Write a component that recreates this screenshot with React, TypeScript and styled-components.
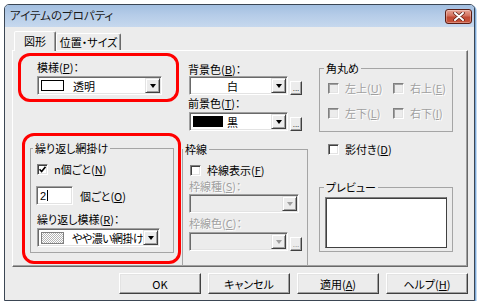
import React from 'react';
import styled, { createGlobalStyle } from 'styled-components';

const GlobalStyle = createGlobalStyle`
  html, body {
    margin: 0;
    padding: 0;
    background: #ffffff;
  }
  body {
    font-family: "Noto Sans CJK JP", "Noto Sans", sans-serif;
    font-size: 11px;
    line-height: 14px;
    color: #000;
    font-feature-settings: "palt";
  }
  *, *::before, *::after {
    box-sizing: border-box;
  }
`;

const Window = styled.div`
  margin: 4px 0 0 4px;
  width: 471px;
  height: 297px;
  border: 1px solid #3b4654;
  border-radius: 5px 5px 0 0;
  background: #ececec;
  box-shadow: 1px 1px 0 #7fa9d6, 2px 2px 0 #c4dbf2;
  display: flex;
  flex-direction: column;
  overflow: hidden;
`;

const TitleBar = styled.div`
  height: 22px;
  flex: none;
  display: flex;
  justify-content: space-between;
  align-items: flex-start;
  padding: 0 2px 0 5px;
  background: linear-gradient(to bottom, #a3bfe0 0%, #b5cce8 45%, #c6d8ee 100%);
`;

const TitleText = styled.span`
  line-height: 20px;
  font-size: 11.5px;
  color: #1b1b1b;
`;

const CloseButton = styled.div`
  margin-top: 4px;
  width: 27px;
  height: 15px;
  border: 1px solid #5b1d14;
  border-radius: 3px;
  background: linear-gradient(to bottom, #e8a595 0%, #d2705d 45%, #c04a34 55%, #c9553c 100%);
  box-shadow: inset 0 0 0 1px rgba(255, 255, 255, 0.3);
  display: flex;
  align-items: center;
  justify-content: center;
`;

const Body = styled.div`
  flex: 1;
  display: flex;
  flex-direction: column;
  padding: 4px 6px 0 7px;
`;

const TabStrip = styled.div`
  height: 19px;
  display: flex;
  align-items: flex-end;
  padding-left: 2px;
`;

const Tab = styled.div<{ $active?: boolean; $w: number }>`
  position: relative;
  z-index: ${p => (p.$active ? 1 : 0)};
  width: ${p => p.$w}px;
  height: ${p => (p.$active ? 20 : 17)}px;
  margin-bottom: ${p => (p.$active ? -1 : 0)}px;
  padding-top: ${p => (p.$active ? 2 : 1)}px;
  background: #ececec;
  border: 1px solid;
  border-bottom: none;
  border-color: #fff #696969 transparent #fff;
  border-radius: 2px 2px 0 0;
  box-shadow: inset -1px 0 0 #a0a0a0;
  text-align: center;
  white-space: nowrap;
`;

const TabPanel = styled.div`
  height: 217px;
  flex: none;
  display: flex;
  padding: 1px 0 0 5px;
  border: 1px solid;
  border-color: #fff #696969 #696969 #fff;
  box-shadow: inset -1px -1px 0 #a0a0a0;
  overflow: hidden;
`;

const Column = styled.div<{ $w: number; $ml?: number }>`
  width: ${p => p.$w}px;
  margin-left: ${p => p.$ml ?? 0}px;
  flex: none;
  display: flex;
  flex-direction: column;
`;

const Highlight = styled.div<{ $w: number; $h: number; $mt: number; $ml: number; $pad: string }>`
  width: ${p => p.$w}px;
  height: ${p => p.$h}px;
  margin: ${p => p.$mt}px 0 0 ${p => p.$ml}px;
  padding: ${p => p.$pad};
  border: 3px solid #ff0000;
  border-radius: 12px;
  flex: none;
`;

const GroupBox = styled.fieldset<{ $w: number; $h?: number; $mt?: number; $open?: boolean }>`
  margin: ${p => p.$mt ?? 0}px 0 0 0;
  padding: 0;
  min-width: 0;
  width: ${p => p.$w}px;
  height: ${p => (p.$h ? `${p.$h}px` : 'auto')};
  flex: ${p => (p.$h ? 'none' : '1')};
  border: 1px solid #a5a5a5;
  border-bottom: ${p => (p.$open ? 'none' : '1px solid #a5a5a5')};
`;

const Legend = styled.legend<{ $x: number }>`
  margin-left: ${p => p.$x}px;
  padding: 0 2px;
  line-height: 14px;
  font-size: 11px;
`;

const GroupInner = styled.div<{ $pad: string }>`
  padding: ${p => p.$pad};
  display: flex;
  flex-direction: column;
`;

const FieldLabel = styled.div<{ $disabled?: boolean; $mt?: number; $ml?: number }>`
  margin: ${p => p.$mt ?? 0}px 0 0 ${p => p.$ml ?? 0}px;
  line-height: 14px;
  white-space: nowrap;
  color: ${p => (p.$disabled ? '#a0a0a0' : '#000')};
  text-shadow: ${p => (p.$disabled ? '1px 1px 0 #fff' : 'none')};
`;

const CheckRow = styled.div<{ $disabled?: boolean; $mt?: number; $ml?: number }>`
  margin: ${p => p.$mt ?? 0}px 0 0 ${p => p.$ml ?? 0}px;
  height: 14px;
  display: flex;
  align-items: center;
  gap: 6px;
  white-space: nowrap;
  color: ${p => (p.$disabled ? '#a0a0a0' : '#000')};
  text-shadow: ${p => (p.$disabled ? '1px 1px 0 #fff' : 'none')};
`;

const RowText = styled.span`
  white-space: nowrap;
`;

const CheckBox = styled.span<{ $disabled?: boolean }>`
  width: 11px;
  height: 11px;
  flex: none;
  border: 1px solid;
  border-color: #808080 #fff #fff #808080;
  box-shadow: inset 1px 1px 0 ${p => (p.$disabled ? '#a0a0a0' : '#404040')}, inset -1px -1px 0 #e3e3e3;
  background: ${p => (p.$disabled ? '#ececec' : '#fff')};
  display: flex;
  align-items: center;
  justify-content: center;
`;

const ComboRow = styled.div<{ $mt?: number; $ml?: number }>`
  margin: ${p => p.$mt ?? 0}px 0 0 ${p => p.$ml ?? 0}px;
  display: flex;
  align-items: flex-end;
  gap: 2px;
`;

const Combo = styled.div<{ $w: number; $disabled?: boolean }>`
  width: ${p => p.$w}px;
  height: 19px;
  flex: none;
  display: flex;
  align-items: center;
  padding: 1px;
  border: 1px solid;
  border-color: #a0a0a0 #fff #fff #a0a0a0;
  box-shadow: inset 1px 1px 0 #696969, inset -1px -1px 0 #e3e3e3;
  background: ${p => (p.$disabled ? '#ececec' : '#fff')};
`;

const ComboValue = styled.div<{ $gap: number; $tight?: boolean }>`
  flex: 1;
  min-width: 0;
  height: 100%;
  display: flex;
  align-items: center;
  gap: ${p => p.$gap}px;
  padding-left: 2px;
  overflow: hidden;
  white-space: nowrap;
  letter-spacing: ${p => (p.$tight ? '-0.5px' : 'normal')};
`;

const Swatch = styled.span<{ $w: number; $h: number; $fill: string; $edge: string }>`
  width: ${p => p.$w}px;
  height: ${p => p.$h}px;
  flex: none;
  background: ${p => p.$fill};
  border: 1px solid ${p => p.$edge};
`;

const DropButton = styled.span<{ $disabled?: boolean }>`
  width: 15px;
  height: 15px;
  flex: none;
  margin-left: auto;
  background: #ececec;
  border: 1px solid;
  border-color: #e3e3e3 #404040 #404040 #e3e3e3;
  box-shadow: inset 1px 1px 0 #fff, inset -1px -1px 0 #a0a0a0;
  display: flex;
  align-items: center;
  justify-content: center;

  &::after {
    content: '';
    width: 0;
    height: 0;
    border-left: 3.5px solid transparent;
    border-right: 3.5px solid transparent;
    border-top: 4px solid ${p => (p.$disabled ? '#a0a0a0' : '#000')};
  }
`;

const DotsButton = styled.span<{ $disabled?: boolean }>`
  width: 12px;
  height: 14px;
  flex: none;
  background: #ececec;
  border: 1px solid;
  border-color: #fff #404040 #404040 #fff;
  box-shadow: inset -1px -1px 0 #a0a0a0;
  display: flex;
  align-items: flex-end;
  justify-content: center;
  padding-bottom: 2px;
  font-family: "Liberation Sans", sans-serif;
  font-size: 8px;
  line-height: 6px;
  color: ${p => (p.$disabled ? '#808080' : '#000')};
`;

const SpinRow = styled.div`
  margin: 10px 0 0 -1px;
  display: flex;
  align-items: center;
  gap: 7px;
`;

const NumberBox = styled.div`
  width: 37px;
  height: 19px;
  display: flex;
  align-items: center;
  padding-left: 3px;
  background: #fff;
  border: 1px solid;
  border-color: #a0a0a0 #fff #fff #a0a0a0;
  box-shadow: inset 1px 1px 0 #696969, inset -1px -1px 0 #e3e3e3;
  font-family: "Liberation Sans", sans-serif;
`;

const Caret = styled.span`
  width: 1px;
  height: 11px;
  margin-left: 1px;
  background: #000;
`;

const CornerGrid = styled.div`
  display: grid;
  grid-template-columns: 65px auto;
  row-gap: 11px;
  padding: 6px 0 11px 8px;
`;

const PreviewBox = styled.div`
  width: 122px;
  height: 51px;
  background: #fff;
  border: 1px solid;
  border-color: #808080 #404040 #404040 #808080;
  box-shadow: inset 1px 1px 0 #404040;
`;

const ButtonRow = styled.div`
  margin-top: 6px;
  display: flex;
  justify-content: flex-end;
  gap: 7px;
`;

const DialogButton = styled.div`
  width: 82px;
  height: 21px;
  display: flex;
  align-items: center;
  justify-content: center;
  background: #ececec;
  border: 1px solid;
  border-color: #fff #404040 #404040 #fff;
  box-shadow: inset -1px -1px 0 #a0a0a0, inset 1px 1px 0 #e3e3e3;
  white-space: nowrap;
`;

const CheckMark = () => (
  <svg width="7" height="7" viewBox="0 0 7 7">
    <polyline points="0.5,3.2 2.6,5.5 6.5,0.8" fill="none" stroke="#000" strokeWidth="1.6" />
  </svg>
);

const CloseGlyph = () => (
  <svg width="12" height="9" viewBox="0 0 12 9">
    <path d="M2 1 L10 8 M10 1 L2 8" stroke="#5b1d14" strokeWidth="3.4" strokeLinecap="round" />
    <path d="M2 1 L10 8 M10 1 L2 8" stroke="#fff" strokeWidth="2" strokeLinecap="round" />
  </svg>
);

const dotted = 'repeating-conic-gradient(#b4b4b4 0 25%, #ffffff 0 50%) 0 0 / 2px 2px';

const App: React.FC = () => {
  return (
    <>
      <GlobalStyle />
      <Window>
        <TitleBar>
          <TitleText>アイテムのプロパティ</TitleText>
          <CloseButton>
            <CloseGlyph />
          </CloseButton>
        </TitleBar>

        <Body>
          <TabStrip>
            <Tab $active $w={42}>図形</Tab>
            <Tab $w={65}>位置・サイズ</Tab>
          </TabStrip>

          <TabPanel>
            <Column $w={164}>
              <Highlight $w={161} $h={49} $mt={1} $ml={0} $pad="4px 0 0 16px">
                <FieldLabel>模様(<u>P</u>)：</FieldLabel>
                <ComboRow $mt={2}>
                  <Combo $w={125}>
                    <ComboValue $gap={9}>
                      <Swatch $w={23} $h={11} $fill="#fff" $edge="#000" />
                      <RowText>透明</RowText>
                    </ComboValue>
                    <DropButton />
                  </Combo>
                </ComboRow>
              </Highlight>

              <Highlight $w={159} $h={131} $mt={31} $ml={4} $pad="5px 0 0 5px">
                <GroupBox $w={144} $h={112}>
                  <Legend $x={2}>繰り返し網掛け</Legend>
                  <GroupInner $pad="7px 0 0 6px">
                    <CheckRow>
                      <CheckBox>
                        <CheckMark />
                      </CheckBox>
                      <RowText>n個ごと(<u>N</u>)</RowText>
                    </CheckRow>
                    <SpinRow>
                      <NumberBox>
                        2<Caret />
                      </NumberBox>
                      <RowText>個ごと(<u>O</u>)</RowText>
                    </SpinRow>
                    <FieldLabel $mt={7}>繰り返し模様(<u>R</u>)：</FieldLabel>
                    <ComboRow $mt={2}>
                      <Combo $w={123}>
                        <ComboValue $gap={8} $tight>
                          <Swatch $w={23} $h={12} $fill={dotted} $edge="#808080" />
                          <RowText>やや濃い網掛け</RowText>
                        </ComboValue>
                        <DropButton />
                      </Combo>
                    </ComboRow>
                  </GroupInner>
                </GroupBox>
              </Highlight>
            </Column>

            <Column $w={126}>
              <FieldLabel $mt={10} $ml={6}>背景色(<u>B</u>)：</FieldLabel>
              <ComboRow $ml={7}>
                <Combo $w={99}>
                  <ComboValue $gap={4}>
                    <Swatch $w={30} $h={11} $fill="#fff" $edge="#fff" />
                    <RowText>白</RowText>
                  </ComboValue>
                  <DropButton />
                </Combo>
                <DotsButton>...</DotsButton>
              </ComboRow>
              <FieldLabel $mt={1} $ml={6}>前景色(<u>T</u>)：</FieldLabel>
              <ComboRow $mt={2} $ml={7}>
                <Combo $w={99}>
                  <ComboValue $gap={4}>
                    <Swatch $w={30} $h={11} $fill="#000" $edge="#000" />
                    <RowText>黒</RowText>
                  </ComboValue>
                  <DropButton />
                </Combo>
                <DotsButton>...</DotsButton>
              </ComboRow>

              <GroupBox $w={126} $mt={11} $open>
                <Legend $x={0}>枠線</Legend>
                <GroupInner $pad="7px 0 0 6px">
                  <CheckRow $ml={1}>
                    <CheckBox />
                    <RowText>枠線表示(<u>F</u>)</RowText>
                  </CheckRow>
                  <FieldLabel $mt={2} $disabled>枠線種(<u>S</u>)：</FieldLabel>
                  <ComboRow $mt={1}>
                    <Combo $w={110} $disabled>
                      <ComboValue $gap={0} />
                      <DropButton $disabled />
                    </Combo>
                  </ComboRow>
                  <FieldLabel $mt={3} $disabled>枠線色(<u>C</u>)：</FieldLabel>
                  <ComboRow $mt={2}>
                    <Combo $w={99} $disabled>
                      <ComboValue $gap={0} />
                      <DropButton $disabled />
                    </Combo>
                    <DotsButton $disabled>...</DotsButton>
                  </ComboRow>
                </GroupInner>
              </GroupBox>
            </Column>

            <Column $w={134} $ml={11}>
              <GroupBox $w={134} $h={71} $mt={9}>
                <Legend $x={4}>角丸め</Legend>
                <CornerGrid>
                  <CheckRow $disabled>
                    <CheckBox $disabled />
                    <RowText>左上(<u>U</u>)</RowText>
                  </CheckRow>
                  <CheckRow $disabled>
                    <CheckBox $disabled />
                    <RowText>右上(<u>E</u>)</RowText>
                  </CheckRow>
                  <CheckRow $disabled>
                    <CheckBox $disabled />
                    <RowText>左下(<u>L</u>)</RowText>
                  </CheckRow>
                  <CheckRow $disabled>
                    <CheckBox $disabled />
                    <RowText>右下(<u>I</u>)</RowText>
                  </CheckRow>
                </CornerGrid>
              </GroupBox>

              <CheckRow $mt={10} $ml={9}>
                <CheckBox />
                <RowText>影付き(<u>D</u>)</RowText>
              </CheckRow>

              <GroupBox $w={134} $h={72} $mt={24}>
                <Legend $x={4}>プレビュー</Legend>
                <GroupInner $pad="3px 5px 3px 5px">
                  <PreviewBox />
                </GroupInner>
              </GroupBox>
            </Column>
          </TabPanel>

          <ButtonRow>
            <DialogButton>OK</DialogButton>
            <DialogButton>キャンセル</DialogButton>
            <DialogButton>
              <RowText>適用(<u>A</u>)</RowText>
            </DialogButton>
            <DialogButton>
              <RowText>ヘルプ(<u>H</u>)</RowText>
            </DialogButton>
          </ButtonRow>
        </Body>
      </Window>
    </>
  );
};

export default App;
